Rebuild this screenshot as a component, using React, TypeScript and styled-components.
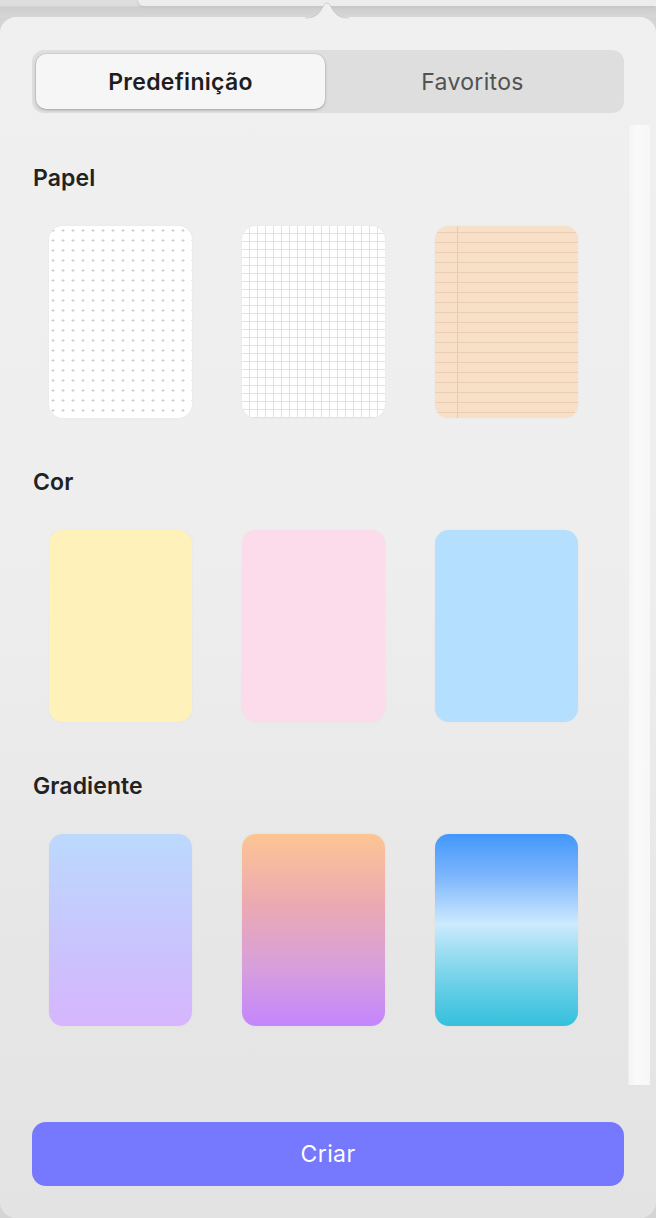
import React from "react";
import styled, { createGlobalStyle } from "styled-components";

const Global = createGlobalStyle`
  html, body { margin: 0; padding: 0; }
  body {
    background: #d3d3d3;
    font-family: "Inter", "Noto Sans", "Liberation Sans", sans-serif;
    -webkit-font-smoothing: antialiased;
  }
  #root { width: 656px; height: 1218px; overflow: hidden; }
`;

const Screen = styled.div`
  width: 656px;
  height: 1218px;
  display: flex;
  flex-direction: column;
  background: #d4d4d4;
`;

const TopStrip = styled.div`
  height: 17px;
  flex: none;
  background: linear-gradient(180deg, #dedede 0px, #dcdcdc 6px, #cdcdcd 7px, #d6d6d6 17px);
`;

const WindowEdge = styled.div`
  margin-left: 138px;
  height: 6px;
  background: #ededed;
  border-bottom-left-radius: 6px;
  box-shadow: -1px 1px 2px rgba(0, 0, 0, 0.08);
`;

const Popover = styled.div`
  position: relative;
  flex: 1;
  display: flex;
  flex-direction: column;
  border-radius: 16px;
  background: linear-gradient(180deg, #f0f0f0 0%, #eeeeee 45%, #e6e6e6 80%, #e3e3e3 100%);
  padding-top: 33px;
`;

const Arrow = styled.svg`
  position: absolute;
  top: -15px;
  left: 305px;
  width: 44px;
  height: 16px;
  overflow: visible;
`;

const Segmented = styled.div`
  margin: 0 32px;
  height: 63px;
  box-sizing: border-box;
  padding: 4px;
  border-radius: 12px;
  background: #dedede;
  display: flex;
`;

const Segment = styled.div<{ $active?: boolean }>`
  flex: none;
  width: ${(p) => (p.$active ? "289px" : "295px")};
  border-radius: 10px;
  display: flex;
  align-items: center;
  justify-content: center;
  font-size: 23px;
  letter-spacing: 0.3px;
  font-weight: ${(p) => (p.$active ? 600 : 400)};
  color: ${(p) => (p.$active ? "#1e1e1e" : "#525252")};
  background: ${(p) => (p.$active ? "#f6f6f6" : "transparent")};
  box-shadow: ${(p) =>
    p.$active ? "0 1px 3px rgba(0,0,0,0.25), 0 0 0 0.5px rgba(0,0,0,0.08)" : "none"};
`;

const Body = styled.div`
  margin-top: 12px;
  height: 960px;
  display: flex;
`;

const Content = styled.div`
  flex: 1;
  padding: 40px 0 0 33px;
  display: flex;
  flex-direction: column;
  gap: 51px;
`;

const Section = styled.section`
  display: flex;
  flex-direction: column;
  gap: 35px;
`;

const Heading = styled.h2`
  margin: 0;
  font-size: 23px;
  line-height: 26px;
  font-weight: 600;
  letter-spacing: 0.1px;
  color: #222222;
`;

const Grid = styled.div`
  display: grid;
  grid-template-columns: repeat(3, 143px);
  column-gap: 50px;
  padding-left: 16px;
`;

const Thumb = styled.div<{ $bg: string; $size?: string; $pos?: string }>`
  width: 143px;
  height: 192px;
  border-radius: 14px;
  background: ${(p) => p.$bg};
  background-size: ${(p) => p.$size || "auto"};
  background-position: ${(p) => p.$pos || "0 0"};
  box-shadow: 0 0 3px rgba(0, 0, 0, 0.04);
`;

const ScrollTrack = styled.div`
  flex: none;
  width: 22px;
  margin-right: 6px;
  background: linear-gradient(90deg, #f4f4f4 0%, #fafafa 40%, #f7f7f7 100%);
  box-shadow: inset 1px 0 0 rgba(0, 0, 0, 0.03);
`;

const Footer = styled.div`
  margin-top: 37px;
  padding: 0 32px;
`;

const CreateButton = styled.button`
  width: 100%;
  height: 64px;
  border: none;
  border-radius: 14px;
  background: #7678fd;
  color: #ffffff;
  font-family: inherit;
  font-size: 23px;
  font-weight: 400;
  letter-spacing: 0.4px;
`;

const dots = {
  bg: "radial-gradient(circle at 1.5px 1.5px, #cdcdcd 1.1px, transparent 1.4px) #ffffff",
  size: "10px 10px",
  pos: "2.5px 3px",
};

const squares = {
  bg: "linear-gradient(90deg, #e1e1e1 1px, transparent 1px), linear-gradient(180deg, #e1e1e1 1px, transparent 1px) #ffffff",
  size: "8px 8px",
  pos: "-1px -1px",
};

const lined = {
  bg:
    "linear-gradient(90deg, transparent 22px, #ecc8ae 22px, #ecc8ae 23px, transparent 23px), linear-gradient(180deg, transparent 9px, #eacdb2 9px) #f8dfc7",
  size: "143px 192px, 10px 10px",
  pos: "0 0, 0 -3px",
};

const colors = ["#fff1ba", "#fcdbeb", "#b4dfff"];

const gradients = [
  "linear-gradient(180deg, #bcd9fd 0%, #c6c9fd 45%, #d6b5fd 100%)",
  "linear-gradient(180deg, #fdc594 0%, #eaa9b3 38%, #d79fdc 70%, #c385fd 100%)",
  "linear-gradient(180deg, #4297fb 0%, #7db6fc 22%, #cdeafe 47%, #a7e1f4 58%, #6bd0e8 78%, #34c0dc 100%)",
];

export default function App() {
  return (
    <>
      <Global />
      <Screen>
        <TopStrip>
          <WindowEdge />
        </TopStrip>
        <Popover>
          <Arrow viewBox="0 0 44 16">
            <path
              d="M0 16 C8 16 12 14 16 8 C19 3 20 1 22 1 C24 1 25 3 28 8 C32 14 36 16 44 16 Z"
              fill="#f0f0f0"
            />
            <path
              d="M0 16 C8 16 12 14 16 8 C19 3 20 1 22 1 C24 1 25 3 28 8 C32 14 36 16 44 16"
              fill="none"
              stroke="#c2c2c2"
              strokeWidth="0.8"
            />
          </Arrow>
          <Segmented>
            <Segment $active>Predefinição</Segment>
            <Segment>Favoritos</Segment>
          </Segmented>
          <Body>
            <Content>
              <Section>
                <Heading>Papel</Heading>
                <Grid>
                  <Thumb $bg={dots.bg} $size={dots.size} $pos={dots.pos} />
                  <Thumb $bg={squares.bg} $size={squares.size} $pos={squares.pos} />
                  <Thumb $bg={lined.bg} $size={lined.size} $pos={lined.pos} />
                </Grid>
              </Section>
              <Section>
                <Heading>Cor</Heading>
                <Grid>
                  {colors.map((c) => (
                    <Thumb key={c} $bg={c} />
                  ))}
                </Grid>
              </Section>
              <Section>
                <Heading>Gradiente</Heading>
                <Grid>
                  {gradients.map((g) => (
                    <Thumb key={g} $bg={g} />
                  ))}
                </Grid>
              </Section>
            </Content>
            <ScrollTrack />
          </Body>
          <Footer>
            <CreateButton>Criar</CreateButton>
          </Footer>
        </Popover>
      </Screen>
    </>
  );
}
